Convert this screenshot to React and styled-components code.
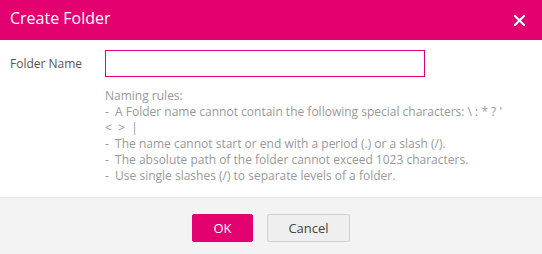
import React from "react";
import styled, { createGlobalStyle } from "styled-components";

const Global = createGlobalStyle`
  html, body { margin: 0; padding: 0; background: #fff; }
  body { font-family: "Open Sans", "Noto Sans", sans-serif; }
  * { box-sizing: border-box; }
`;

const Dialog = styled.div`
  width: 542px;
  height: 254px;
  display: flex;
  flex-direction: column;
  background: #fff;
`;

const Header = styled.div`
  height: 40px;
  background: #e3006f;
  display: flex;
  align-items: center;
  justify-content: space-between;
  padding: 0 17px 0 10px;
`;

const Title = styled.div`
  color: #fff;
  font-size: 16px;
  line-height: 20px;
  margin-top: -5px;
`;

const Close = styled.button`
  border: 0;
  background: none;
  padding: 0;
  width: 11px;
  height: 11px;
  display: flex;
  align-items: center;
  justify-content: center;
  cursor: pointer;
`;

const Body = styled.div`
  flex: 1;
  padding: 10px 10px 0 10px;
  display: grid;
  grid-template-columns: 95px 320px;
  row-gap: 11px;
  align-content: start;
`;

const Label = styled.label`
  font-size: 12px;
  color: #555;
  line-height: 27px;
`;

const Input = styled.input`
  width: 320px;
  height: 27px;
  border: 1px solid #e3006f;
  outline: none;
  padding: 0 6px;
  font-family: inherit;
  font-size: 12px;
`;

const Rules = styled.div`
  grid-column: 2;
  width: 440px;
  font-size: 12px;
  line-height: 16px;
  color: #999;
`;

const RuleLine = styled.div`
  white-space: pre;
`;

const Footer = styled.div`
  height: 57px;
  background: #f3f3f3;
  border-top: 1px solid #e8e8e8;
  display: flex;
  justify-content: center;
  align-items: flex-start;
  padding-top: 16px;
  gap: 14px;
  padding-left: 0;
`;

const Button = styled.button`
  height: 28px;
  width: ${(p) => p.$w}px;
  border: 1px solid ${(p) => (p.$primary ? "#e3006f" : "#cfcfcf")};
  background: ${(p) => (p.$primary ? "#e3006f" : "#efefef")};
  color: ${(p) => (p.$primary ? "#fff" : "#444")};
  font-family: inherit;
  font-size: 13px;
  border-radius: 2px;
  padding: 0;
  cursor: pointer;
`;

const rules = [
  "Naming rules:",
  "-  A Folder name cannot contain the following special characters: \\ : * ? '",
  "<  >  |",
  "-  The name cannot start or end with a period (.) or a slash (/).",
  "-  The absolute path of the folder cannot exceed 1023 characters.",
  "-  Use single slashes (/) to separate levels of a folder.",
];

export default function App() {
  return (
    <>
      <Global />
      <Dialog>
        <Header>
          <Title>Create Folder</Title>
          <Close aria-label="Close">
            <svg width="11" height="11" viewBox="0 0 11 11">
              <path d="M1 1L10 10M10 1L1 10" stroke="#fff" strokeWidth="2" strokeLinecap="square" />
            </svg>
          </Close>
        </Header>
        <Body>
          <Label>Folder Name</Label>
          <Input />
          <Rules>
            {rules.map((r, i) => (
              <RuleLine key={i}>{r}</RuleLine>
            ))}
          </Rules>
        </Body>
        <Footer>
          <Button $primary $w={61}>OK</Button>
          <Button $w={83}>Cancel</Button>
        </Footer>
      </Dialog>
    </>
  );
}
